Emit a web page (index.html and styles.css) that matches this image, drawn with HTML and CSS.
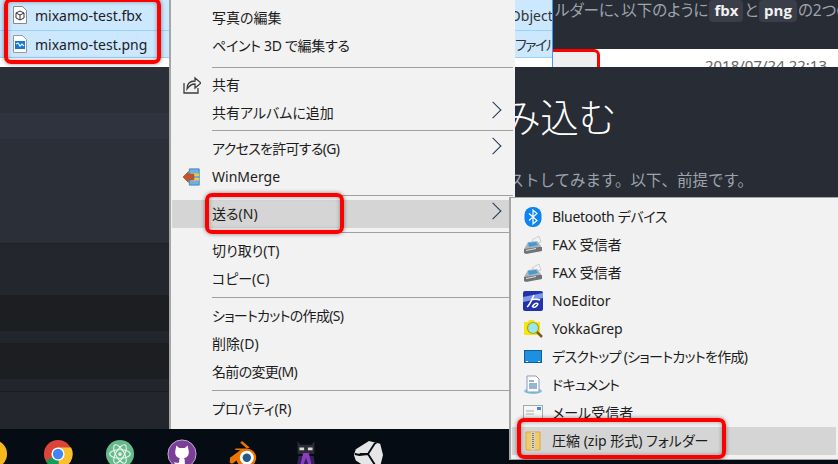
FILE: index.html
```html
<!DOCTYPE html>
<html lang="ja">
<head>
  <meta charset="UTF-8">
  <title>送る - 圧縮フォルダー</title>
  <link rel="stylesheet" href="styles.css">
</head>
<body>
  <svg class="defs" width="0" height="0">
    <symbol id="fax" viewBox="0 0 20 20">
      <path d="M9 5l7-4 2 6-6 2z" fill="#f2f2f2" stroke="#b5b5b5" stroke-width=".6"/>
      <path d="M1 14l4-7 9-1 4 5v5l-15 2z" fill="#aeb3b8"/>
      <path d="M5 8l8-1 2 3-9 2z" fill="#3f9ad8"/>
      <path d="M1 14l15-2 3 0v4l-16 3-2-1z" fill="#6f7479"/>
      <path d="M3 15l10-2v1l-10 2z" fill="#e2e2e2"/>
    </symbol>
  </svg>

  <!-- browser behind -->
  <div class="article-top">
    <p class="intro">ルダーに、以下のように<code>fbx</code>と<code>png</code>の2つの</p>
    <div class="date-strip">
      <div class="mark-back"></div>
      <span>2018/07/24 22:13</span>
    </div>
  </div>

  <div class="editor">
    <div class="sidebar">
      <div class="side-a"></div>
      <div class="side-b"></div>
      <div class="side-a side-tall"></div>
      <div class="side-c"></div>
      <div class="side-d"></div>
      <div class="side-e"></div>
      <div class="side-d"></div>
      <div class="side-e"></div>
      <div class="side-c side-end"></div>
    </div>
    <div class="article">
      <h1>読み込む</h1>
      <p>テストしてみます。以下、前提です。</p>
    </div>
  </div>

  <div class="taskbar">
    <svg class="task-icon partial" viewBox="0 0 32 32"><circle cx="16" cy="16" r="15" fill="#f5b81e"/><circle cx="16" cy="16" r="7" fill="#e8780f"/></svg>
    <svg class="task-icon chrome" viewBox="0 0 32 32">
      <circle cx="16" cy="16" r="15" fill="#db4437"/>
      <path d="M16 16L3 23.500a15 15 0 0 0 14 7.500z" fill="#0f9d58"/>
      <path d="M16 9h14a15 15 0 0 1-13 22z" fill="#fbc02d"/>
      <circle cx="16" cy="16" r="7" fill="#fff"/>
      <circle cx="16" cy="16" r="5.500" fill="#4285f4"/>
    </svg>
    <svg class="task-icon" viewBox="0 0 32 32">
      <circle cx="16" cy="16" r="15" fill="#66b98b"/>
      <g fill="none" stroke="#e6f3ea" stroke-width="1.200">
        <ellipse cx="16" cy="16" rx="11" ry="4.500" transform="rotate(60 16 16)"/>
        <ellipse cx="16" cy="16" rx="11" ry="4.500" transform="rotate(-60 16 16)"/>
        <ellipse cx="16" cy="16" rx="11" ry="4.500"/>
      </g>
      <circle cx="16" cy="16" r="2" fill="#e6f3ea"/>
    </svg>
    <svg class="task-icon" viewBox="0 0 32 32">
      <circle cx="16" cy="16" r="15" fill="#7b3f98" stroke="#c9b4d6"/>
      <path d="M10 7l3 2.500h6L22 7l1 5c1 4-1 8-5 8.500 1 1 1 2 1 4V30h-6v-3c-3 1-5 0-6-3 1 1 3 2 6 1v-1c0-2 0-3 1-3.500-4-.5-6-4.500-5-8.500z" fill="#fff"/>
    </svg>
    <svg class="task-icon blender" viewBox="0 0 32 32">
      <path d="M1 20l11-8-6-.5 1-1.500h11c6 0 11 4 11 10 0 6-5 10-11 10-5 0-9-3-10-7l-4 3c-2 1-4-1-3-3z" fill="#ea7600"/>
      <path d="M14 2l8 7-3 1-7-6z" fill="#ea7600"/>
      <circle cx="19" cy="20" r="7.500" fill="#fff"/>
      <circle cx="19" cy="20" r="4.500" fill="#265787"/>
    </svg>
    <svg class="task-icon" viewBox="0 0 32 32">
      <path d="M7 2l3 4h12l3-4v14H7z" fill="#2b2b33"/>
      <path d="M9 9h5v3H9zM18 9h5v3h-5z" fill="#d8d8d8"/>
      <path d="M8 18h16l2 12H6z" fill="#37205a"/>
      <path d="M13 15h6l3 13h-3l-3-8-3 8h-3z" fill="#8a3fc0"/>
    </svg>
    <svg class="task-icon" viewBox="0 0 32 32">
      <path d="M17 2l12 3 3 12-3 12-12 3L3 23 1 17l2-6z" fill="#e6e6e6"/>
      <path d="M16 16L7 17l-5-1M16 16l7-11 2-1M16 16l7 11 2 2" fill="none" stroke="#050c14" stroke-width="2"/>
      <path d="M16 16l-9 0" stroke="#050c14" stroke-width="2"/>
    </svg>
  </div>

  <!-- explorer window -->
  <div class="files">
    <div class="file-row">
      <svg class="file-icon" viewBox="0 0 16 18">
        <path d="M1.500.5h9l4 4v13h-13z" fill="#fff" stroke="#8a8a8a"/>
        <path d="M8 5l4 2v5l-4 2-4-2V7zM4 7l4 2 4-2M8 9v5" fill="none" stroke="#333"/>
      </svg>
      <span class="file-name">mixamo-test.fbx</span>
      <span class="file-type">3D Object</span>
    </div>
    <div class="file-row">
      <svg class="file-icon" viewBox="0 0 16 18">
        <path d="M1.500.5h9l4 4v13h-13z" fill="#fff" stroke="#9a9a9a"/>
        <path d="M3 6h10v8H3z" fill="#1976d2"/>
        <path d="M4 9l2-1 2 3 2-2 2 2" fill="none" stroke="#dff" stroke-width="1.200"/>
      </svg>
      <span class="file-name">mixamo-test.png</span>
      <span class="file-type">PNG ファイル</span>
    </div>
  </div>

  <!-- context menu -->
  <div class="menu">
    <div class="item">写真の編集</div>
    <div class="item tight-s">ペイント 3D で編集する</div>
    <div class="sep sep-first"></div>
    <div class="item">
      <svg class="menu-icon" viewBox="0 0 18 18"><path d="M1 7v10h14v-5M4 13c0-5 3-8 8-8V2l6 5-6 5V8c-4 0-6 2-8 5z" fill="none" stroke="#3c3c3c" stroke-width="1.300"/></svg>
      共有
    </div>
    <div class="item">共有アルバムに追加<i class="arrow"></i></div>
    <div class="sep sep-tight"></div>
    <div class="item tight">アクセスを許可する(G)<i class="arrow"></i></div>
    <div class="item">
      <svg class="menu-icon" viewBox="0 0 20 20">
        <path d="M7 1h11v18H7z" fill="#6fb0e4" stroke="#3f7fb8"/>
        <path d="M9 6h9v3H9zM9 11h9v3H9z" fill="#f2c73f"/>
        <path d="M0 10l6-6v3h6v6H6v3z" fill="#c4552a" stroke="#8c3a18" stroke-width=".6"/>
      </svg>
      WinMerge
    </div>
    <div class="sep"></div>
    <div class="item item-on">送る(N)<i class="arrow"></i></div>
    <div class="sep"></div>
    <div class="item">切り取り(T)</div>
    <div class="item">コピー(C)</div>
    <div class="sep"></div>
    <div class="item tight">ショートカットの作成(S)</div>
    <div class="item">削除(D)</div>
    <div class="item tight">名前の変更(M)</div>
    <div class="sep"></div>
    <div class="item">プロパティ(R)</div>
  </div>

  <!-- send to submenu -->
  <div class="submenu">
    <div class="item tight-s">
      <svg class="sub-icon" viewBox="0 0 20 20"><rect x="1.500" y="0" width="17" height="20" rx="8" fill="#0a84f0"/><path d="M6 6.500l8 7-4 3.500V3l4 3.500-8 7" fill="none" stroke="#fff" stroke-width="1.200"/></svg>
      Bluetooth デバイス
    </div>
    <div class="item"><svg class="sub-icon"><use href="#fax"/></svg>FAX 受信者</div>
    <div class="item"><svg class="sub-icon"><use href="#fax"/></svg>FAX 受信者</div>
    <div class="item">
      <svg class="sub-icon" viewBox="0 0 20 20"><rect width="20" height="20" rx="2" fill="#2233aa"/><path d="M0 6l20-4v5L0 11z" fill="#7f97e4"/><path d="M4 16c3-2 5-8 7-12M8 9c2-1 7-1 9 0M9 16c2-3 4-5 6-3-1 2-3 4-5 3" fill="none" stroke="#fff" stroke-width="1.500"/></svg>
      NoEditor
    </div>
    <div class="item">
      <svg class="sub-icon" viewBox="0 0 20 20"><path d="M1 3h4l1-2h5l1 2h5v13H1z" fill="#f3e80a"/><circle cx="10" cy="9" r="5.500" fill="#9be8e8" stroke="#b59b20" stroke-width="1.200"/><path d="M14 13l5 5" stroke="#7a5c20" stroke-width="2.500"/></svg>
      YokkaGrep
    </div>
    <div class="item tight">
      <svg class="sub-icon" viewBox="0 0 20 20"><rect x="1.500" y="3.500" width="17" height="12" fill="#1f8fe0" stroke="#0c5f9e"/><path d="M3 14.500h2M15 14.500h2" stroke="#fff"/></svg>
      デスクトップ (ショートカットを作成)
    </div>
    <div class="item tight">
      <svg class="sub-icon" viewBox="0 0 20 20"><ellipse cx="10" cy="16" rx="9" ry="3" fill="#7cc4ec"/><path d="M4 1h9l3 3v13H4z" fill="#fff" stroke="#8a9bb0"/><path d="M6 6h5M6 9h8M6 11h8M6 13h8" stroke="#2a6aa8"/></svg>
      ドキュメント
    </div>
    <div class="item">
      <svg class="sub-icon" viewBox="0 0 20 20"><rect x=".5" y="2.500" width="19" height="13" fill="#f6f6f6" stroke="#a8a8a8"/><path d="M3 8h8M3 11h8" stroke="#aaa"/><rect x="14" y="4" width="4" height="3" fill="#3b8ee0"/></svg>
      メール受信者
    </div>
    <div class="item item-on">
      <svg class="sub-icon" viewBox="0 0 20 20"><path d="M3 1h14v18H3z" fill="#f2ca6a" stroke="#d9a93f"/><path d="M8 1h4v18H8z" fill="#d8d4c4"/><path d="M10 2v16" stroke="#777" stroke-dasharray="1 1" stroke-width="2"/></svg>
      圧縮 (zip 形式) フォルダー
    </div>
  </div>

  <!-- red marks drawn on the screenshot -->
  <div class="mark mark-files"></div>
  <div class="mark mark-send"></div>
  <div class="mark mark-zip"></div>
</body>
</html>
```

FILE: styles.css
```css
html, body {
  margin: 0;
  padding: 0;
}
body {
  position: relative;
  width: 838px;
  height: 464px;
  overflow: hidden;
  background: #050c14;
  font-family: "Noto Sans", "Noto Sans CJK JP", sans-serif;
  font-size: 14px;
  font-feature-settings: "palt";
  color: #1c1c1c;
}
.defs {
  position: absolute;
}

/* top part of the page behind */
.article-top {
  height: 67px;
  background: #282c35;
  overflow: hidden;
}
.intro {
  margin: 0;
  height: 49px;
  padding-left: 555px;
  font-size: 15.5px;
  line-height: 20px;
  color: #9ea3ad;
  white-space: nowrap;
  overflow: hidden;
}
.intro code {
  display: inline-block;
  margin: 0 1px;
  padding: 0 5px;
  height: 22px;
  line-height: 21px;
  font-family: "Open Sans", sans-serif;
  font-weight: 700;
  font-size: 15px;
  color: #f2f2f2;
  background: #3a3e49;
  border-radius: 4px;
}
.date-strip {
  position: relative;
  height: 12px;
  background: #fff;
  padding: 6px 11px 0 0;
  text-align: right;
  color: #666;
  font-size: 15px;
  line-height: 20px;
}
.mark-back {
  position: absolute;
  left: 470px;
  top: 0;
  width: 130px;
  height: 30px;
  box-sizing: border-box;
  background: #efefef;
  border: 3px solid #f00;
  border-radius: 6px;
}

/* dark editor */
.editor {
  display: flex;
  height: 362px;
  background: #282c35;
}
.sidebar {
  width: 170px;
  display: flex;
  flex-direction: column;
}
.side-a { height: 46px; background: #2a2f38; }
.side-b { height: 26px; background: #2e333e; }
.side-tall { height: 104px; border-bottom: 1px solid #1e2026; }
.side-c { height: 52px; background: #23262d; }
.side-d { height: 36px; background: #1d1e22; }
.side-e { height: 12px; background: #22252c; }
.side-end { height: 37px; border-top: 1px solid #1a1c20; }
.article {
  flex: 1;
  min-width: 0;
  padding-left: 297px;
  white-space: nowrap;
}
.article h1 {
  margin: 23px 0 0 -3px;
  height: 55px;
  line-height: 55px;
  font-size: 38.5px;
  font-weight: 200;
  color: #fff;
}
.article p {
  margin: 23px 0 0 26px;
  font-size: 15.5px;
  line-height: 24px;
  font-feature-settings: normal;
  color: #9ea3ad;
}

/* taskbar */
.taskbar {
  height: 35px;
  display: flex;
  align-items: flex-start;
  gap: 32px;
  padding: 10px 0 0 43px;
  box-sizing: border-box;
  background: #050c14;
  overflow: hidden;
}
.task-icon {
  position: relative;
  width: 30px;
  height: 30px;
  flex: none;
}
.partial {
  position: absolute;
  left: -22px;
  top: 439px;
}

/* explorer rows */
.files {
  position: absolute;
  left: 0;
  top: 0;
  width: 553px;
  height: 67px;
  box-sizing: border-box;
  background: #fff;
  border-right: 1px solid #3b9bf0;
  overflow: hidden;
}
.file-row {
  display: flex;
  align-items: center;
  height: 26px;
  background: #cce8ff;
  border-bottom: 1px solid #99d1ff;
}
.file-row:first-child {
  height: 30px;
}
.file-icon {
  width: 16px;
  height: 18px;
  margin-left: 12px;
  flex: none;
}
.file-name {
  width: 453px;
  margin-left: 7px;
  flex: none;
}
.file-type {
  white-space: nowrap;
  color: #333;
}
.file-row:last-child .file-type {
  letter-spacing: -1.5px;
}

/* menus */
.menu,
.submenu {
  position: absolute;
  box-sizing: border-box;
  background: #f2f2f2;
  border-left: 2px solid #a6a6a6;
}
.menu {
  left: 169px;
  top: 0;
  width: 346px;
  height: 429px;
  padding: 4px 0 0 1px;
}
.submenu {
  left: 509px;
  top: 197px;
  width: 329px;
  height: 263px;
  padding: 5px 2px 0 1px;
  border-top: 1px solid #a6a6a6;
  border-bottom: 1px solid #a6a6a6;
}
.item {
  position: relative;
  height: 28px;
  line-height: 28px;
  padding-left: 40px;
  white-space: nowrap;
}
.tight {
  letter-spacing: -0.7px;
}
.tight-s {
  letter-spacing: -0.3px;
}
.item-on {
  background: #d5d5d5;
}
.sep {
  height: 1px;
  margin: 4px 2px 4px 40px;
  background: #a0a0a0;
}
.sep-first {
  margin-top: 7px;
  margin-bottom: 3px;
}
.sep-tight {
  margin-top: 3px;
}
.menu-icon {
  position: absolute;
  width: 18px;
  height: 18px;
  left: 11px;
  top: 5px;
}
.sub-icon {
  position: absolute;
  width: 20px;
  height: 20px;
  left: 11px;
  top: 4px;
}
.arrow {
  position: absolute;
  left: 315px;
  top: 5px;
  width: 12px;
  height: 12px;
  box-sizing: border-box;
  border-top: 1px solid #1f3a58;
  border-right: 1px solid #1f3a58;
  transform: rotate(45deg);
}

/* red marks */
.mark {
  position: absolute;
  box-sizing: border-box;
  border: 4px solid #f00;
  border-radius: 7px;
  box-shadow: 0 0 4px rgba(0, 0, 0, 0.45), inset 0 0 4px rgba(0, 0, 0, 0.35);
}
.mark-files {
  left: 4px;
  top: -2px;
  width: 157px;
  height: 66px;
}
.mark-send {
  left: 205px;
  top: 193px;
  width: 139px;
  height: 41px;
}
.mark-zip {
  left: 517px;
  top: 418px;
  width: 209px;
  height: 41px;
}
```
